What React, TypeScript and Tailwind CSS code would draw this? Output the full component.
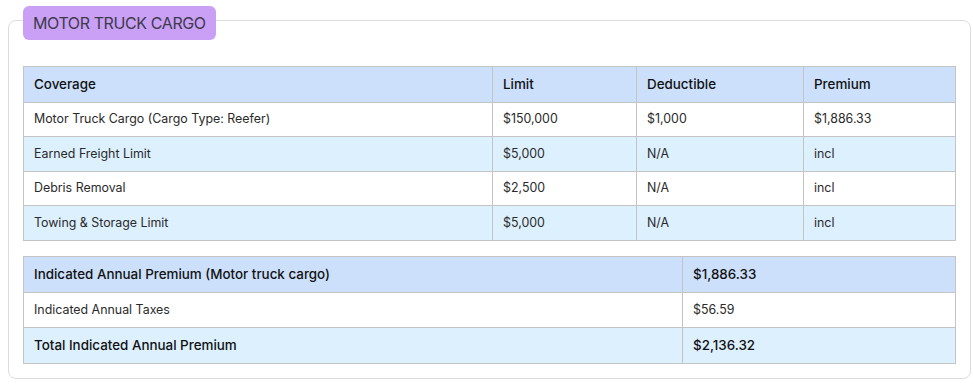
import * as React from 'react';

type Row = { coverage: string; limit: string; deductible: string; premium: string };

const rows: Row[] = [
  { coverage: 'Motor Truck Cargo (Cargo Type: Reefer)', limit: '$150,000', deductible: '$1,000', premium: '$1,886.33' },
  { coverage: 'Earned Freight Limit', limit: '$5,000', deductible: 'N/A', premium: 'incl' },
  { coverage: 'Debris Removal', limit: '$2,500', deductible: 'N/A', premium: 'incl' },
  { coverage: 'Towing & Storage Limit', limit: '$5,000', deductible: 'N/A', premium: 'incl' },
];

const cell = 'border border-[#c4c4c4] px-[10px] text-left align-middle';
const head = `${cell} text-[13.4px] font-medium text-[#111]`;
const body = `${cell} text-[12.4px] font-normal text-[#2a2a2a]`;

export default function App() {
  return (
    <div className="bg-white pl-2 pr-[2px] pt-[20px] pb-[7px] font-['Inter',sans-serif]">
      <div className="relative rounded-[8px] border border-[#dcdcdc] px-[14px] pb-[14px] pt-[45px]">
        <div className="absolute -top-[15px] left-[14px] flex h-[34px] items-center rounded-[6px] bg-[#c9a0f5] px-[10px] text-[16px] tracking-[-0.4px] text-[#3d3a4a]">
          MOTOR TRUCK CARGO
        </div>

        <table className="w-full table-fixed border-collapse">
          <colgroup>
            <col className="w-[469px]" />
            <col className="w-[144px]" />
            <col className="w-[167px]" />
            <col />
          </colgroup>
          <thead>
            <tr className="h-[36px] bg-[#cce0fc]">
              <th className={head}>Coverage</th>
              <th className={head}>Limit</th>
              <th className={head}>Deductible</th>
              <th className={head}>Premium</th>
            </tr>
          </thead>
          <tbody>
            {rows.map((r, i) => (
              <tr key={r.coverage} className={i % 2 === 1 ? 'h-[35px] bg-[#ddf0fe]' : 'h-[34px] bg-white'}>
                <td className={body}>{r.coverage}</td>
                <td className={body}>{r.limit}</td>
                <td className={body}>{r.deductible}</td>
                <td className={body}>{r.premium}</td>
              </tr>
            ))}
          </tbody>
        </table>

        <table className="mt-[15px] w-full table-fixed border-collapse">
          <colgroup>
            <col className="w-[659px]" />
            <col />
          </colgroup>
          <tbody>
            <tr className="h-[36px] bg-[#cce0fc]">
              <td className={head}>Indicated Annual Premium (Motor truck cargo)</td>
              <td className={head}>$1,886.33</td>
            </tr>
            <tr className="h-[35px] bg-white">
              <td className={body}>Indicated Annual Taxes</td>
              <td className={body}>$56.59</td>
            </tr>
            <tr className="h-[36px] bg-[#ddf0fe]">
              <td className={head}>Total Indicated Annual Premium</td>
              <td className={head}>$2,136.32</td>
            </tr>
          </tbody>
        </table>
      </div>
    </div>
  );
}
